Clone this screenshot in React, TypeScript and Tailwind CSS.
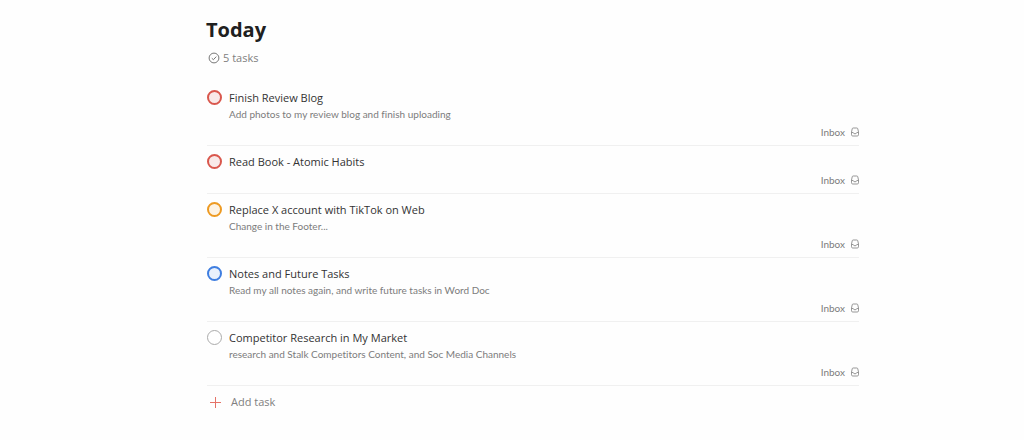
type Priority = 'red' | 'orange' | 'blue' | 'none';

interface Task {
  id: string;
  title: string;
  description?: string;
  priority: Priority;
}

const tasks: Task[] = [
  { id: 'blog', title: 'Finish Review Blog', description: 'Add photos to my review blog and finish uploading', priority: 'red' },
  { id: 'book', title: 'Read Book - Atomic Habits', priority: 'red' },
  { id: 'footer', title: 'Replace X account with TikTok on Web', description: 'Change in the Footer...', priority: 'orange' },
  { id: 'notes', title: 'Notes and Future Tasks', description: 'Read my all notes again, and write future tasks in Word Doc', priority: 'blue' },
  { id: 'market', title: 'Competitor Research in My Market', description: 'research and Stalk Competitors Content, and Soc Media Channels', priority: 'none' },
];

const ringStyles: Record<Priority, string> = {
  red: 'border-2 border-[#d9574d] bg-[#f9e9e8]',
  orange: 'border-2 border-[#ed9a22] bg-[#fdf3e4]',
  blue: 'border-2 border-[#3f7ee0] bg-[#e8f0fc]',
  none: 'border border-[#aaaaaa] bg-white',
};

function CheckCircleIcon() {
  return (
    <svg viewBox="0 0 12 12" className="size-3 shrink-0" fill="none" stroke="#777777" aria-hidden="true">
      <circle cx="6" cy="6" r="4.9" strokeWidth="1" />
      <path d="M3.8 6.2 5.4 7.7 8.3 4.6" strokeWidth="1" />
    </svg>
  );
}

function InboxIcon() {
  return (
    <svg viewBox="0 0 8 10" className="h-2.5 w-2 shrink-0" fill="none" stroke="#8c8c8c" strokeWidth="0.9" strokeLinejoin="round" aria-hidden="true">
      <path d="M2.200 1h3.600c.6 0 .9.300 1 .9L7.500 5v2.800c0 .7-.5 1.200-1.200 1.200H1.700C1 9 .5 8.500.5 7.800V5L1.200 1.900C1.300 1.300 1.600 1 2.200 1Z" />
      <path d="M.5 5.500h1.700c.2.900.8 1.300 1.800 1.300s1.600-.4 1.800-1.300h1.700" />
    </svg>
  );
}

function TaskRow({ task }: { task: Task }) {
  return (
    <li className="flex items-start gap-[7px] border-b border-[#f0f0f0] pt-2 pb-1">
      <input
        id={task.id}
        type="checkbox"
        className={`size-[15px] shrink-0 appearance-none rounded-full ${ringStyles[task.priority]}`}
      />
      <div className="min-w-0 flex-1">
        <label htmlFor={task.id} className="block text-[11px] leading-4 text-[#333333]">
          {task.title}
        </label>
        {task.description && (
          <p className="font-['Lato','Open_Sans',sans-serif] text-[10px] leading-4 text-[#7c7c7c] [font-variant-ligatures:none]">
            {task.description}
          </p>
        )}
        <a href="#inbox" className="mt-0.5 mb-px flex items-center justify-end gap-1.5 font-['Lato','Open_Sans',sans-serif] text-[10px] leading-4 text-[#7c7c7c]">
          Inbox
          <InboxIcon />
        </a>
      </div>
    </li>
  );
}

export default function App() {
  return (
    <main className="min-h-screen bg-[#fefefe] pt-4 pr-[165px] pb-6 pl-[206px] font-['Open_Sans','Noto_Sans',sans-serif]">
      <h1 className="text-[20px] leading-7 font-bold text-[#202020]">Today</h1>
      <p className="mt-1.5 flex items-center gap-[3px] pl-0.5 text-[11px] leading-4 text-[#808080]">
        <CheckCircleIcon />
        5 tasks
      </p>
      <ul className="mt-4 pl-px">
        {tasks.map((task) => (
          <TaskRow key={task.id} task={task} />
        ))}
      </ul>
      <button type="button" className="mt-2 flex items-center gap-2.5 pl-1 text-[11px] leading-4 text-[#808080]">
        <svg viewBox="0 0 11 11" className="size-[11px]" stroke="#e57368" strokeWidth="1" aria-hidden="true">
          <path d="M5.500 0v11M0 5.500h11" />
        </svg>
        Add task
      </button>
    </main>
  );
}
